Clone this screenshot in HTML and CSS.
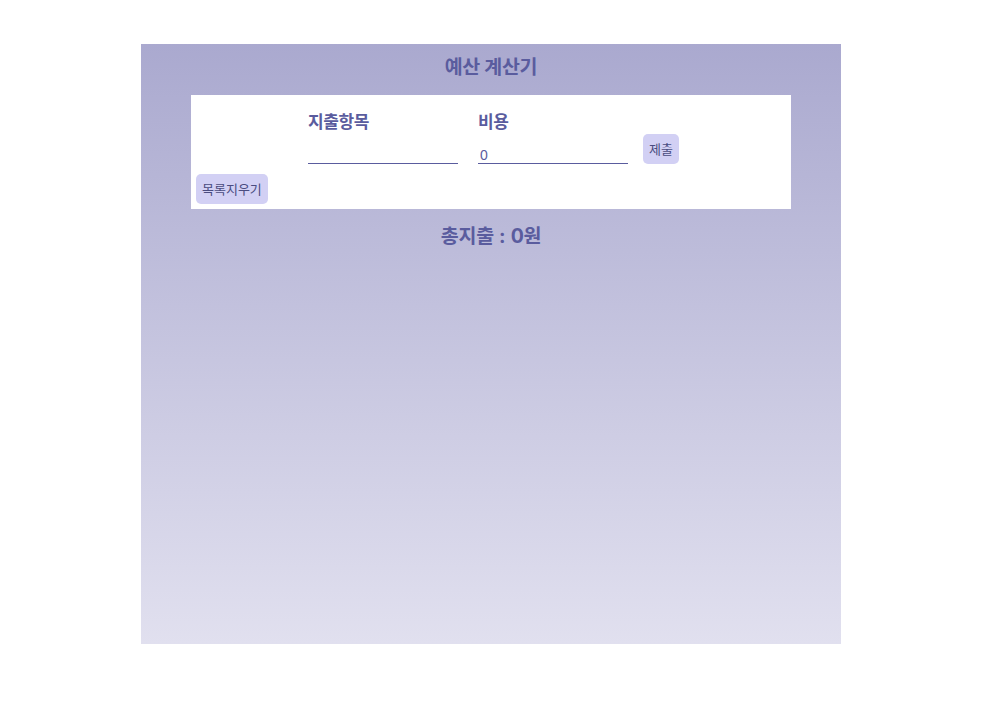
FILE: index.html
```html
<!DOCTYPE html>
<html lang="ko">
<head>
<meta charset="utf-8">
<title>예산 계산기</title>
<link rel="stylesheet" href="styles.css">
</head>
<body>
<div class="app">
  <h1 class="title">예산 계산기</h1>
  <div class="panel">
    <form class="form-row">
      <div class="field">
        <label class="label" for="item">지출항목</label>
        <input class="input" id="item" type="text" value="">
      </div>
      <div class="field">
        <label class="label" for="cost">비용</label>
        <input class="input" id="cost" type="number" value="0">
      </div>
      <button class="btn btn-submit" type="button">제출</button>
    </form>
    <button class="btn btn-clear" type="button">목록지우기</button>
  </div>
  <p class="total">총지출 : 0원</p>
</div>
</body>
</html>
```

FILE: styles.css
```css
* { box-sizing: border-box; }
html, body { margin: 0; padding: 0; background: #fff; }
body {
  font-family: Inter, "Noto Sans CJK KR", sans-serif;
  padding-top: 44px;
}
.app {
  width: 700px;
  height: 600px;
  margin-left: 141px;
  background: linear-gradient(to bottom, #aaa9cf 0%, #e1e0ef 100%);
  display: flex;
  flex-direction: column;
  align-items: center;
}
.title {
  margin: 0;
  height: 51px;
  padding-top: 9px;
  font-size: 19.5px;
  line-height: 28px;
  font-weight: 700;
  color: #5a5c9e;
  letter-spacing: -0.3px;
}
.panel {
  width: 600px;
  height: 114px;
  background: #fff;
  padding: 0 5px;
}
.form-row {
  display: flex;
  align-items: flex-end;
  justify-content: center;
  padding-top: 14px;
  padding-left: 5px;
}
.field {
  display: flex;
  flex-direction: column;
  margin-right: 20px;
}
.field + .field { margin-right: 15px; }
.label {
  font-size: 17px;
  font-weight: 700;
  line-height: 26px;
  color: #5a5c9e;
  height: 28px;
  letter-spacing: -0.4px;
}
.input {
  width: 150px;
  height: 27px;
  border: none;
  border-bottom: 1px solid #5a5c9e;
  outline: none;
  padding: 10px 2px 0;
  font-family: "Liberation Sans", Arial, sans-serif;
  font-size: 14px;
  color: #5a5c9e;
  background: transparent;
  -moz-appearance: textfield;
}
.input::-webkit-outer-spin-button,
.input::-webkit-inner-spin-button { -webkit-appearance: none; margin: 0; }
.btn {
  border: none;
  border-radius: 5px;
  background: #d2d0f4;
  color: #4a4c80;
  font-family: "Noto Sans CJK KR", sans-serif;
  font-size: 13px;
  height: 30px;
  padding: 0 6px;
  line-height: 30px;
  cursor: pointer;
}
.btn-submit { margin-bottom: 0; }
.btn-clear { margin-top: 10px; }
.total {
  margin: 0;
  padding-top: 12px;
  font-size: 19.5px;
  line-height: 30px;
  font-weight: 700;
  color: #5a5c9e;
  letter-spacing: -0.3px;
  word-spacing: 1px;
}
```
